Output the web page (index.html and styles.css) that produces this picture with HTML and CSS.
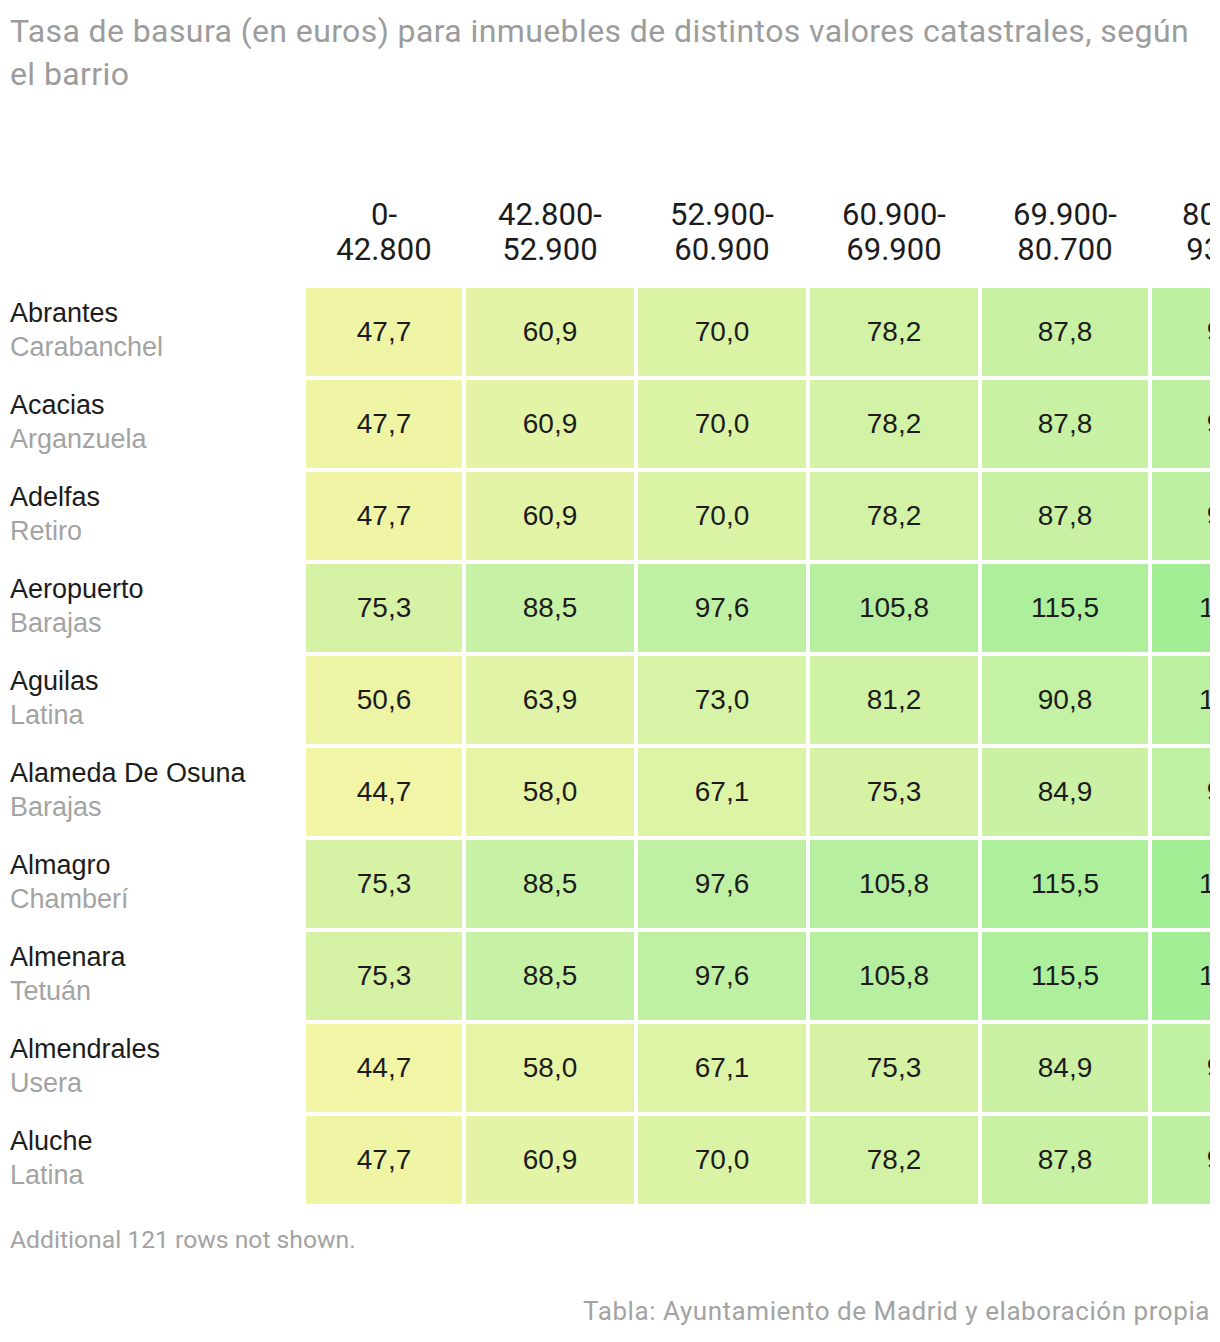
FILE: index.html
```html
<!DOCTYPE html>
<html lang="es">
<head>
<meta charset="utf-8">
<title>Tasa de basura</title>
<link rel="stylesheet" href="styles.css">
</head>
<body>
<div class="page">
  <h1 class="title">Tasa de basura (en euros) para inmuebles de distintos valores catastrales, según el barrio</h1>

  <div class="table-wrap">
  <div class="table">
    <div class="row head">
      <div class="hcell empty"></div>
      <div class="hcell">0-<br>42.800</div>
      <div class="hcell">42.800-<br>52.900</div>
      <div class="hcell">52.900-<br>60.900</div>
      <div class="hcell">60.900-<br>69.900</div>
      <div class="hcell">69.900-<br>80.700</div>
      <div class="hcell">80.700-<br>93.300</div>
    </div>

    <div class="row">
      <div class="label"><span class="name">Abrantes</span><span class="district">Carabanchel</span></div>
      <div class="cell" style="background:#f0f5a6">47,7</div>
      <div class="cell" style="background:#e3f4a6">60,9</div>
      <div class="cell" style="background:#daf3a5">70,0</div>
      <div class="cell" style="background:#d2f2a5">78,2</div>
      <div class="cell" style="background:#c8f1a4">87,8</div>
      <div class="cell" style="background:#bef0a2">98,6</div>
    </div>

    <div class="row">
      <div class="label"><span class="name">Acacias</span><span class="district">Arganzuela</span></div>
      <div class="cell" style="background:#f0f5a6">47,7</div>
      <div class="cell" style="background:#e3f4a6">60,9</div>
      <div class="cell" style="background:#daf3a5">70,0</div>
      <div class="cell" style="background:#d2f2a5">78,2</div>
      <div class="cell" style="background:#c8f1a4">87,8</div>
      <div class="cell" style="background:#bef0a2">98,6</div>
    </div>

    <div class="row">
      <div class="label"><span class="name">Adelfas</span><span class="district">Retiro</span></div>
      <div class="cell" style="background:#f0f5a6">47,7</div>
      <div class="cell" style="background:#e3f4a6">60,9</div>
      <div class="cell" style="background:#daf3a5">70,0</div>
      <div class="cell" style="background:#d2f2a5">78,2</div>
      <div class="cell" style="background:#c8f1a4">87,8</div>
      <div class="cell" style="background:#bef0a2">98,6</div>
    </div>

    <div class="row">
      <div class="label"><span class="name">Aeropuerto</span><span class="district">Barajas</span></div>
      <div class="cell" style="background:#d5f2a5">75,3</div>
      <div class="cell" style="background:#c7f1a4">88,5</div>
      <div class="cell" style="background:#bff0a3">97,6</div>
      <div class="cell" style="background:#b6ef9f">105,8</div>
      <div class="cell" style="background:#adef9a">115,5</div>
      <div class="cell" style="background:#a2ee94">126,3</div>
    </div>

    <div class="row">
      <div class="label"><span class="name">Aguilas</span><span class="district">Latina</span></div>
      <div class="cell" style="background:#edf4a6">50,6</div>
      <div class="cell" style="background:#e0f3a6">63,9</div>
      <div class="cell" style="background:#d7f3a5">73,0</div>
      <div class="cell" style="background:#cff2a4">81,2</div>
      <div class="cell" style="background:#c5f1a4">90,8</div>
      <div class="cell" style="background:#bbf0a1">101,6</div>
    </div>

    <div class="row">
      <div class="label"><span class="name">Alameda De Osuna</span><span class="district">Barajas</span></div>
      <div class="cell" style="background:#f3f5a6">44,7</div>
      <div class="cell" style="background:#e6f4a6">58,0</div>
      <div class="cell" style="background:#ddf3a5">67,1</div>
      <div class="cell" style="background:#d5f2a5">75,3</div>
      <div class="cell" style="background:#cbf2a4">84,9</div>
      <div class="cell" style="background:#c0f1a3">95,7</div>
    </div>

    <div class="row">
      <div class="label"><span class="name">Almagro</span><span class="district">Chamberí</span></div>
      <div class="cell" style="background:#d5f2a5">75,3</div>
      <div class="cell" style="background:#c7f1a4">88,5</div>
      <div class="cell" style="background:#bff0a3">97,6</div>
      <div class="cell" style="background:#b6ef9f">105,8</div>
      <div class="cell" style="background:#adef9a">115,5</div>
      <div class="cell" style="background:#a2ee94">126,3</div>
    </div>

    <div class="row">
      <div class="label"><span class="name">Almenara</span><span class="district">Tetuán</span></div>
      <div class="cell" style="background:#d5f2a5">75,3</div>
      <div class="cell" style="background:#c7f1a4">88,5</div>
      <div class="cell" style="background:#bff0a3">97,6</div>
      <div class="cell" style="background:#b6ef9f">105,8</div>
      <div class="cell" style="background:#adef9a">115,5</div>
      <div class="cell" style="background:#a2ee94">126,3</div>
    </div>

    <div class="row">
      <div class="label"><span class="name">Almendrales</span><span class="district">Usera</span></div>
      <div class="cell" style="background:#f3f5a6">44,7</div>
      <div class="cell" style="background:#e6f4a6">58,0</div>
      <div class="cell" style="background:#ddf3a5">67,1</div>
      <div class="cell" style="background:#d5f2a5">75,3</div>
      <div class="cell" style="background:#cbf2a4">84,9</div>
      <div class="cell" style="background:#c0f1a3">95,7</div>
    </div>

    <div class="row">
      <div class="label"><span class="name">Aluche</span><span class="district">Latina</span></div>
      <div class="cell" style="background:#f0f5a6">47,7</div>
      <div class="cell" style="background:#e3f4a6">60,9</div>
      <div class="cell" style="background:#daf3a5">70,0</div>
      <div class="cell" style="background:#d2f2a5">78,2</div>
      <div class="cell" style="background:#c8f1a4">87,8</div>
      <div class="cell" style="background:#bef0a2">98,6</div>
    </div>
  </div>
  </div>

  <p class="note">Additional 121 rows not shown.</p>
  <p class="source">Tabla: Ayuntamiento de Madrid y elaboración propia</p>
</div>
</body>
</html>
```

FILE: styles.css
```css
html, body {
  margin: 0;
  padding: 0;
  background: #ffffff;
}

.page {
  padding: 10px 10px 0 10px;
  font-family: "Liberation Sans", Arial, sans-serif;
  color: #1c1c1c;
}

.title {
  margin: 0;
  font-family: Roboto, "Liberation Sans", sans-serif;
  font-weight: 400;
  font-size: 32px;
  letter-spacing: 0.4px;
  line-height: 43px;
  color: #9c9c9c;
}

.table-wrap {
  margin-top: 101px;
  overflow: hidden;
}

.table {
  display: flex;
  flex-direction: column;
  gap: 4px;
}

.row {
  display: grid;
  grid-template-columns: 292px 156px 168px 168px 168px 166px 164px;
  column-gap: 4px;
}

.row:not(.head) {
  height: 88px;
}

.hcell {
  align-self: end;
  padding-bottom: 17px;
  text-align: center;
  font-family: Roboto, "Liberation Sans", sans-serif;
  font-size: 31px;
  line-height: 35px;
  color: #1c1c1c;
  white-space: nowrap;
}

.label {
  display: flex;
  flex-direction: column;
  justify-content: center;
  padding-bottom: 4px;
  font-size: 27px;
  line-height: 34px;
  white-space: nowrap;
}

.name {
  color: #1c1c1c;
}

.district {
  color: #a3a3a3;
}

.cell {
  display: flex;
  align-items: center;
  justify-content: center;
  font-size: 28px;
  color: #1c1c1c;
  white-space: nowrap;
}

.note {
  margin: 21px 0 0 0;
  font-family: Roboto, "Liberation Sans", sans-serif;
  font-size: 24.7px;
  line-height: 30px;
  color: #a3a3a3;
}

.source {
  margin: 41px 0 0 0;
  text-align: right;
  font-family: Roboto, "Liberation Sans", sans-serif;
  font-size: 26px;
  letter-spacing: 0.56px;
  line-height: 30px;
  color: #a3a3a3;
}
```
